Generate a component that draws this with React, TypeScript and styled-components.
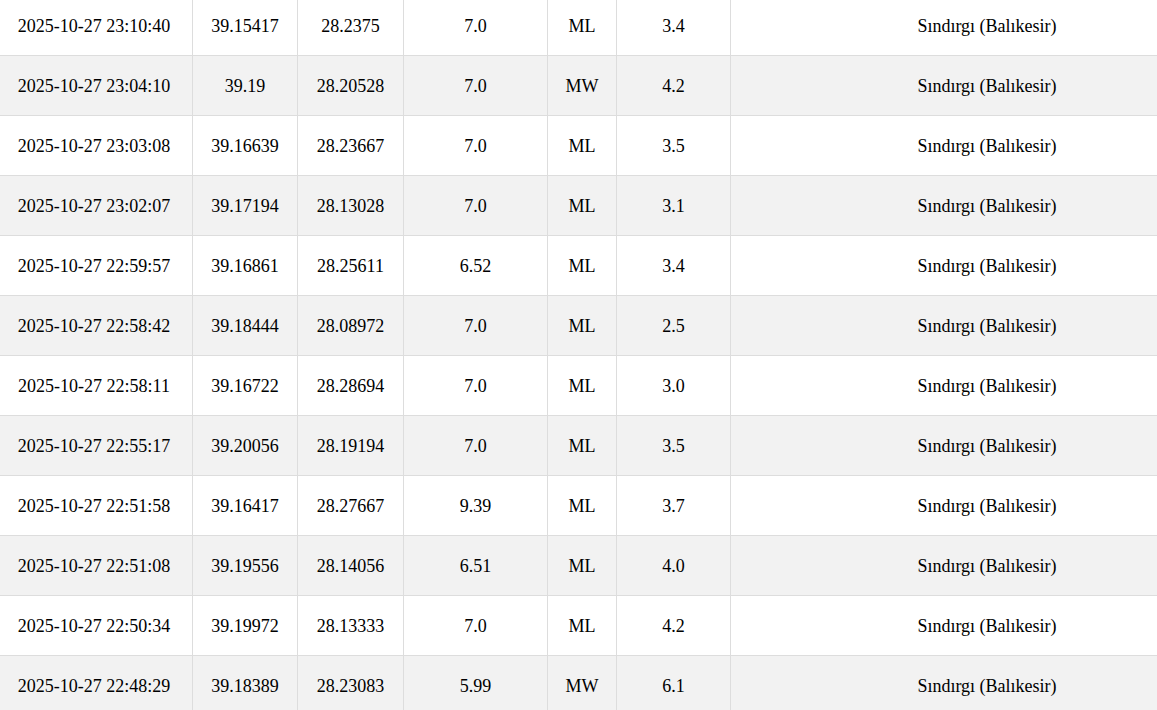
import React, { FC } from 'react';
import styled, { createGlobalStyle } from 'styled-components';

const GlobalStyle = createGlobalStyle`
  html, body {
    margin: 0;
    padding: 0;
    background: #ffffff;
    overflow: hidden;
  }
  body {
    font-family: 'Liberation Serif', 'Times New Roman', serif;
    color: #000;
  }
`;

// page is scrolled a little, so the first row peeks in from the top
const Wrapper = styled.div`
  margin-top: -4px;
  width: 1157px;
`;

const Table = styled.table`
  width: 1157px;
  table-layout: fixed;
  border-collapse: separate;
  border-spacing: 0;
  font-family: 'Liberation Serif', 'Times New Roman', serif;
  font-size: 18px;
  color: #000;
`;

const Row = styled.tr<{ $striped: boolean }>`
  height: 60px;
  background-color: ${({ $striped }) => ($striped ? '#f2f2f2' : '#ffffff')};
`;

const Cell = styled.td`
  box-sizing: border-box;
  height: 60px;
  padding: 2px 6px 0;
  text-align: center;
  vertical-align: middle;
  border-right: 1px solid #dddddd;
  border-bottom: 1px solid #dddddd;
  white-space: nowrap;
  font-family: inherit;
  font-size: inherit;
`;

const DateCell = styled(Cell)`
  padding: 2px 8px 0 4px;
`;

// the location column runs on past the right edge, so its text sits right of centre
const PlaceCell = styled(Cell)`
  padding: 2px 8px 0 94px;
  border-right: none;
`;

const widths = [193, 105, 106, 144, 69, 114, 426];

type Quake = {
  date: string;
  lat: string;
  lng: string;
  depth: string;
  type: string;
  mag: string;
  place: string;
};

const place = 'Sındırgı (Balıkesir)';

const quakes: Quake[] = [
  { date: '2025-10-27 23:10:40', lat: '39.15417', lng: '28.2375', depth: '7.0', type: 'ML', mag: '3.4', place },
  { date: '2025-10-27 23:04:10', lat: '39.19', lng: '28.20528', depth: '7.0', type: 'MW', mag: '4.2', place },
  { date: '2025-10-27 23:03:08', lat: '39.16639', lng: '28.23667', depth: '7.0', type: 'ML', mag: '3.5', place },
  { date: '2025-10-27 23:02:07', lat: '39.17194', lng: '28.13028', depth: '7.0', type: 'ML', mag: '3.1', place },
  { date: '2025-10-27 22:59:57', lat: '39.16861', lng: '28.25611', depth: '6.52', type: 'ML', mag: '3.4', place },
  { date: '2025-10-27 22:58:42', lat: '39.18444', lng: '28.08972', depth: '7.0', type: 'ML', mag: '2.5', place },
  { date: '2025-10-27 22:58:11', lat: '39.16722', lng: '28.28694', depth: '7.0', type: 'ML', mag: '3.0', place },
  { date: '2025-10-27 22:55:17', lat: '39.20056', lng: '28.19194', depth: '7.0', type: 'ML', mag: '3.5', place },
  { date: '2025-10-27 22:51:58', lat: '39.16417', lng: '28.27667', depth: '9.39', type: 'ML', mag: '3.7', place },
  { date: '2025-10-27 22:51:08', lat: '39.19556', lng: '28.14056', depth: '6.51', type: 'ML', mag: '4.0', place },
  { date: '2025-10-27 22:50:34', lat: '39.19972', lng: '28.13333', depth: '7.0', type: 'ML', mag: '4.2', place },
  { date: '2025-10-27 22:48:29', lat: '39.18389', lng: '28.23083', depth: '5.99', type: 'MW', mag: '6.1', place },
];

const App: FC = () => {
  return (
    <>
      <GlobalStyle />
      <Wrapper>
        <Table>
          <colgroup>
            {widths.map((w, i) => (
              <col key={i} style={{ width: w }} />
            ))}
          </colgroup>
          <tbody>
            {quakes.map((q, i) => (
              <Row key={q.date} $striped={i % 2 === 1}>
                <DateCell>{q.date}</DateCell>
                <Cell>{q.lat}</Cell>
                <Cell>{q.lng}</Cell>
                <Cell>{q.depth}</Cell>
                <Cell>{q.type}</Cell>
                <Cell>{q.mag}</Cell>
                <PlaceCell>{q.place}</PlaceCell>
              </Row>
            ))}
          </tbody>
        </Table>
      </Wrapper>
    </>
  );
};

export default App;
